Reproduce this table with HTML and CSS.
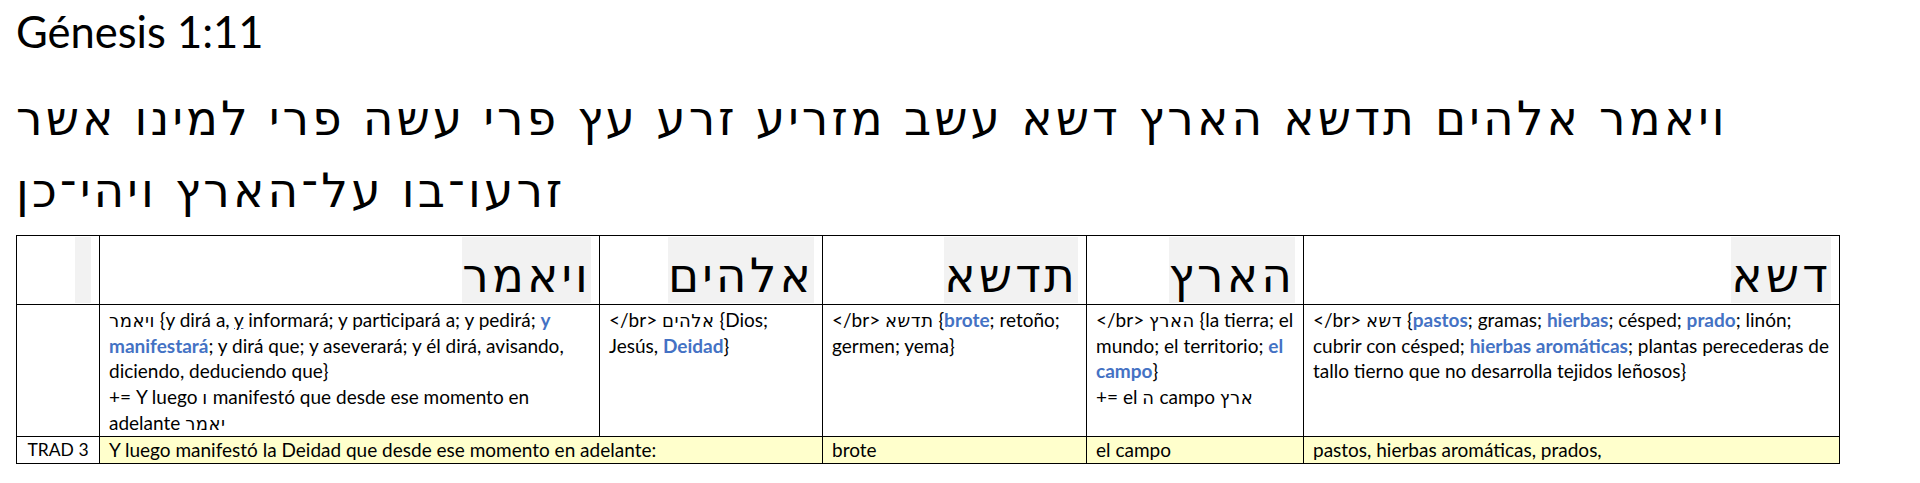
FILE: index.html
```html
<!DOCTYPE html>
<html lang="es">
<head>
<meta charset="utf-8">
<title>Génesis 1:11</title>
<link rel="stylesheet" href="styles.css">
</head>
<body>
<div class="page">
  <h1 class="ref">Génesis 1:11</h1>
  <p class="verse" lang="he">ויאמר אלהים תדשא הארץ דשא עשב מזריע זרע עץ פרי עשה פרי למינו אשר זרעו־בו על־הארץ ויהי־כן</p>
  <table class="grid">
    <colgroup>
      <col class="c-label">
      <col class="c-w1">
      <col class="c-w2">
      <col class="c-w3">
      <col class="c-w4">
      <col class="c-w5">
    </colgroup>
    <tr class="row-head">
      <td><span class="hl hl-empty"></span></td>
      <td><span class="hl" lang="he">ויאמר</span></td>
      <td><span class="hl" lang="he">אלהים</span></td>
      <td><span class="hl" lang="he">תדשא</span></td>
      <td><span class="hl" lang="he">הארץ</span></td>
      <td><span class="hl" lang="he">דשא</span></td>
    </tr>
    <tr class="row-gloss">
      <td></td>
      <td><span lang="he">ויאמר</span> {y dirá a, <u class="sp">y</u> informará; y participará a; y pedirá; <b class="key">y manifestará</b>; y dirá que; y aseverará; y él dirá, avisando, diciendo, deduciendo que}<br>+= Y luego <span lang="he">ו</span> manifestó que desde ese momento en adelante <span lang="he">יאמר</span></td>
      <td>&lt;/br&gt; <span lang="he">אלהים</span> {Dios; Jesús, <b class="key">Deidad</b>}</td>
      <td>&lt;/br&gt; <span lang="he">תדשא</span> {<b class="key">brote</b>; retoño; germen; yema}</td>
      <td>&lt;/br&gt; <span lang="he">הארץ</span> {la tierra; el mundo; el territorio; <b class="key">el campo</b>}<br>+= el <span lang="he">ה</span> campo <span lang="he">ארץ</span></td>
      <td>&lt;/br&gt; <span lang="he">דשא</span> {<b class="key">pastos</b>; gramas; <b class="key">hierbas</b>; césped; <b class="key">prado</b>; linón; cubrir con césped; <b class="key">hierbas aromáticas</b>; plantas perecederas de tallo tierno que no desarrolla tejidos leñosos}</td>
    </tr>
    <tr class="row-trad">
      <td class="label">TRAD 3</td>
      <td colspan="2">Y luego manifestó la Deidad que desde ese momento en adelante:</td>
      <td>brote</td>
      <td>el campo</td>
      <td>pastos, hierbas aromáticas, prados,</td>
    </tr>
  </table>
</div>
</body>
</html>
```

FILE: styles.css
```css
html, body {
  margin: 0;
  padding: 0;
  background: #ffffff;
}

body {
  font-family: Lato, "Liberation Sans", "DejaVu Sans", sans-serif;
  color: #000000;
}

.page {
  width: 1822px;
  padding: 0 0 0 16px;
}

.ref {
  margin: 0;
  padding-top: 5px;
  font-weight: 400;
  font-size: 43.5px;
  line-height: 52px;
}

.verse {
  margin: 26px 0 0 0;
  font-family: "DejaVu Sans", "Liberation Sans", sans-serif;
  font-size: 47px;
  letter-spacing: 3.1px;
  line-height: 72px;
}

.grid {
  margin-top: 8px;
  border-collapse: collapse;
  table-layout: fixed;
  width: 1823px;
}

.grid td {
  border: 1px solid #000000;
  padding: 2px 9px 0 9px;
  vertical-align: top;
  font-size: 19px;
  line-height: 25.7px;
}

.c-label { width: 83px; }
.c-w1 { width: 500px; }
.c-w2 { width: 223px; }
.c-w3 { width: 264px; }
.c-w4 { width: 217px; }
.c-w5 { width: 536px; }

.grid .row-head td {
  height: 66px;
  padding: 1px 8px 1px 9px;
  text-align: right;
  vertical-align: top;
  line-height: 0;
}

.hl {
  display: inline-block;
  box-sizing: border-box;
  background: #f2f2f2;
  font-family: "DejaVu Sans", "Liberation Sans", sans-serif;
  font-size: 47px;
  letter-spacing: 3.1px;
  line-height: 52px;
  height: 66px;
  padding-top: 13px;
  vertical-align: top;
}

.hl-empty {
  width: 16px;
}

[lang="he"] {
  font-family: "DejaVu Sans", "Liberation Sans", sans-serif;
}

.row-gloss [lang="he"] {
  font-size: 18px;
  letter-spacing: 0.5px;
  line-height: 1;
}

.key {
  color: #4472c4;
  font-weight: 700;
}

.sp {
  text-decoration: underline;
  text-decoration-color: #2f5597;
}

.grid .row-trad td {
  background: #ffffcc;
  height: 26px;
  padding-top: 0;
  line-height: 25px;
  vertical-align: middle;
}

.grid .row-trad .label {
  background: #ffffff;
  text-align: center;
  padding: 0;
  font-size: 17.5px;
}
```
